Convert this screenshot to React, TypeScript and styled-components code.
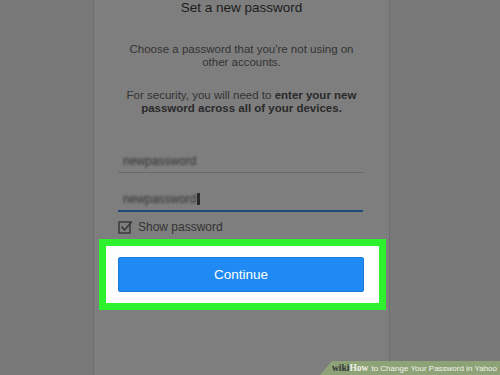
import React from "react";
import styled, { createGlobalStyle } from "styled-components";

const Global = createGlobalStyle`
  html, body { margin: 0; padding: 0; }
  body { width: 500px; height: 375px; overflow: hidden; background: #797979; font-family: "Liberation Sans", Arial, sans-serif; }
`;

const Page = styled.div`
  position: relative;
  width: 500px;
  height: 375px;
  background: #797979;
  display: flex;
`;

const Panel = styled.div`
  margin-left: 93px;
  width: 295px;
  height: 375px;
  background: #7e7e7e;
  border-left: 1px solid #6e6e6e;
  border-right: 1px solid #6e6e6e;
  display: flex;
  flex-direction: column;
  align-items: center;
`;

const Title = styled.h1`
  margin: 0;
  font-size: 13.5px;
  line-height: 16px;
  font-weight: normal;
  color: #1c1c1c;
`;

const Para = styled.p<{ $top: number }>`
  margin: ${(p) => p.$top}px 0 0;
  width: 236px;
  text-align: center;
  font-size: 11.5px;
  line-height: 13px;
  color: #333;
  b { color: #2a2a2a; }
`;

const Form = styled.div`
  margin-top: 34px;
  width: 245px;
  display: flex;
  flex-direction: column;
  margin-left: -2px;
`;

const Field = styled.div<{ $active?: boolean }>`
  height: ${(p) => (p.$active ? 22 : 23)}px;
  display: flex;
  align-items: center;
  padding-left: 5px;
  border-bottom: ${(p) => (p.$active ? "2px solid #20477a" : "1px solid #6a6a6a")};
  margin-top: ${(p) => (p.$active ? 15 : 0)}px;
`;

const Blurred = styled.span`
  font-size: 12px;
  color: #333;
  filter: blur(0.9px);
`;

const Caret = styled.span`
  display: inline-block;
  width: 3px;
  height: 12px;
  background: #2a2a2a;
  margin-left: 1px;
  filter: blur(0.6px);
`;

const CheckRow = styled.div`
  margin-top: 8px;
  display: flex;
  align-items: center;
  gap: 4px;
  font-size: 12px;
  color: #333;
`;

const Frame = styled.div`
  margin-top: 5px;
  margin-left: 2px;
  border: 7px solid #2cf12c;
  background: #fefefe;
  padding: 11px 15px 11px 12px;
`;

const Button = styled.button`
  display: block;
  width: 246px;
  height: 35px;
  border: 1px solid #1b7ad9;
  border-radius: 2px;
  background: #1f8af3;
  color: #fff;
  font-family: "Liberation Sans", Arial, sans-serif;
  font-size: 13.5px;
  padding: 0;
`;

const Watermark = styled.div`
  position: absolute;
  right: 0;
  bottom: 0;
  width: 180px;
  height: 14px;
  background: #8da377;
  clip-path: polygon(12px 0, 100% 0, 100% 100%, 0 100%);
  display: flex;
  align-items: center;
  justify-content: flex-end;
  padding-right: 3px;
  box-sizing: border-box;
  font-size: 8px;
  color: #f2f2ea;
  white-space: nowrap;
`;

const Wiki = styled.span`
  font-family: "Liberation Serif", serif;
  font-weight: bold;
  font-size: 9.5px;
  color: #333;
`;

const How = styled.span`
  font-family: "Liberation Serif", serif;
  font-weight: bold;
  font-size: 9.5px;
  color: #f0f0e6;
  margin-right: 3px;
`;

const CheckIcon = () => (
  <svg width="16" height="14" viewBox="0 0 16 14" fill="none">
    <rect x="1" y="2" width="11" height="11" stroke="#3a3a3a" strokeWidth="1.5" />
    <path d="M3.5 6.5 L6.5 10 L14 1.5" stroke="#3a3a3a" strokeWidth="1.6" />
  </svg>
);

export default function App() {
  return (
    <>
      <Global />
      <Page>
        <Panel>
          <Title>Set a new password</Title>
          <Para $top={27}>Choose a password that you're not using on other accounts.</Para>
          <Para $top={20}>
            For security, you will need to <b>enter your new password across all of your devices.</b>
          </Para>
          <Form>
            <Field>
              <Blurred>newpassword</Blurred>
            </Field>
            <Field $active>
              <Blurred>newpassword</Blurred>
              <Caret />
            </Field>
            <CheckRow>
              <CheckIcon />
              <span>Show password</span>
            </CheckRow>
          </Form>
          <Frame>
            <Button>Continue</Button>
          </Frame>
        </Panel>
        <Watermark>
          <Wiki>wiki</Wiki>
          <How>How</How>
          to Change Your Password in Yahoo
        </Watermark>
      </Page>
    </>
  );
}
